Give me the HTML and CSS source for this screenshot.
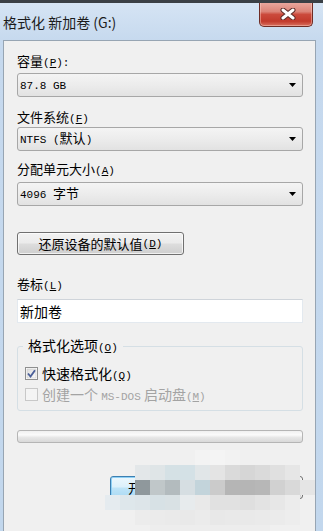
FILE: index.html
```html
<!DOCTYPE html>
<html lang="zh-CN">
<head>
<meta charset="utf-8">
<title>格式化 新加卷 (G:)</title>
<link rel="stylesheet" href="styles.css">
</head>
<body>
<div class="window">
  <div class="titlebar">
    <div class="title">格式化 新加卷 (G:)</div>
    <div class="close">
      <svg width="16" height="12" viewBox="0 0 16 12">
        <path d="M3 2 L13 10 M13 2 L3 10" stroke="#5a2a26" stroke-width="5" stroke-linecap="round" fill="none"/>
        <path d="M3 2 L13 10 M13 2 L3 10" stroke="#ffffff" stroke-width="3" stroke-linecap="round" fill="none"/>
      </svg>
    </div>
  </div>
  <div class="client">
    <div class="label l1">容量<span class="asc">(<u>P</u>):</span></div>
    <div class="select s1"><span class="val"><span class="asc">87.8 GB</span></span><svg class="arrow" width="7" height="4" viewBox="0 0 7 4"><polygon points="0,0 7,0 3.5,4" fill="#000"/></svg></div>

    <div class="label l2">文件系统<span class="asc">(<u>F</u>)</span></div>
    <div class="select s2"><span class="val"><span class="asc">NTFS (</span>默认<span class="asc">)</span></span><svg class="arrow" width="7" height="4" viewBox="0 0 7 4"><polygon points="0,0 7,0 3.5,4" fill="#000"/></svg></div>

    <div class="label l3">分配单元大小<span class="asc">(<u>A</u>)</span></div>
    <div class="select s3"><span class="val"><span class="asc">4096 </span>字节</span><svg class="arrow" width="7" height="4" viewBox="0 0 7 4"><polygon points="0,0 7,0 3.5,4" fill="#000"/></svg></div>

    <div class="button restore">还原设备的默认值<span class="asc">(<u>D</u>)</span></div>

    <div class="label l4">卷标<span class="asc">(<u>L</u>)</span></div>
    <div class="textbox">新加卷</div>

    <fieldset class="group">
      <legend>格式化选项<span class="asc">(<u>O</u>)</span></legend>
      <div class="check r1">
        <svg class="box" width="13" height="13" viewBox="0 0 13 13">
          <defs>
            <linearGradient id="cb" x1="0" y1="0" x2="1" y2="1">
              <stop offset="0" stop-color="#dcdcdc"/>
              <stop offset="1" stop-color="#fbfbfb"/>
            </linearGradient>
          </defs>
          <rect x="0.5" y="0.5" width="12" height="12" fill="#fff" stroke="#8e8f8f"/>
          <rect x="2" y="2" width="9" height="9" fill="url(#cb)" stroke="#c6c6c6" stroke-width="0.6"/>
          <path d="M3 6.5 L5.5 9.5 L10 3.2" stroke="#4a5f98" stroke-width="1.9" fill="none"/>
        </svg>
        <span>快速格式化<span class="asc">(<u>Q</u>)</span></span>
      </div>
      <div class="check r2 disabled">
        <svg class="box" width="13" height="13" viewBox="0 0 13 13">
          <rect x="0.5" y="0.5" width="12" height="12" fill="#f4f4f4" stroke="#c8c8c8"/>
        </svg>
        <span>创建一个 <span class="asc">MS-DOS</span> 启动盘<span class="asc">(<u>M</u>)</span></span>
      </div>
    </fieldset>

    <div class="progress"></div>

    <div class="actions">
      <div class="button default">开始<span class="asc">(<u>S</u>)</span></div>
      <div class="button">关闭<span class="asc">(<u>C</u>)</span></div>
    </div>
  </div>

  <div class="mosaic">
    <i></i><i></i><i></i><i></i><i></i><i></i><i style="background:#f3f3f3"></i><i style="background:#f4f4f4"></i><i style="background:#f2f2f2"></i><i></i><i></i><i></i><i></i><i></i>
    <i></i><i></i><i style="background:#e3e7e9"></i><i style="background:#dfe5e7"></i><i style="background:#d5e1e5"></i><i style="background:#d4e1e6"></i><i style="background:#e1e6e8"></i><i style="background:#e4e4e4"></i><i style="background:#dadada"></i><i style="background:#d6d6d6"></i><i style="background:#dadada"></i><i style="background:#e0e0e0"></i><i style="background:#e6e6e6"></i><i></i>
    <i></i><i></i><i style="background:#8f989c"></i><i style="background:#c0c7c9"></i><i style="background:#b3bbbe"></i><i style="background:#d6dee2"></i><i style="background:#c3d4db"></i><i style="background:#cbcbcb"></i><i style="background:#b5b5b5"></i><i style="background:#b5b5b5"></i><i style="background:#b7b7b7"></i><i style="background:#d1d1d1"></i><i style="background:#d9d9d9"></i><i style="background:#e5e5e5"></i>
    <i style="background:#e5ebef"></i><i style="background:#dee7eb"></i><i style="background:#dde5e9"></i><i style="background:#d7e1e5"></i><i style="background:#d9e1e4"></i><i style="background:#e7ebed"></i><i style="background:#e9e9e9"></i><i style="background:#e1e1e1"></i><i style="background:#e1e1e1"></i><i style="background:#dfdfdf"></i><i style="background:#e3e3e3"></i><i style="background:#e7e7e7"></i><i style="background:#ececec"></i><i></i>
    <i></i><i></i><i style="background:#ececec"></i><i style="background:#ebebeb"></i><i style="background:#eaeaea"></i><i style="background:#e9e9e9"></i><i style="background:#ebebeb"></i><i style="background:#e8e8e8"></i><i style="background:#e9e9e9"></i><i style="background:#e9e9e9"></i><i style="background:#eaeaea"></i><i style="background:#ebebeb"></i><i style="background:#ededed"></i><i></i>
    <i></i><i></i><i></i><i style="background:#ededed"></i><i style="background:#ededed"></i><i style="background:#ededed"></i><i style="background:#ededed"></i><i style="background:#ededed"></i><i style="background:#ededed"></i><i style="background:#ededed"></i><i style="background:#ededed"></i><i></i><i></i><i></i>
  </div>
</div>
</body>
</html>
```

FILE: styles.css
```css
* { box-sizing: border-box; }

html, body {
  margin: 0;
  padding: 0;
  background: #c4d8ee;
}

.window {
  position: relative;
  width: 323px;
  height: 531px;
  overflow: hidden;
  display: flex;
  flex-direction: column;
  padding: 0 7px 0 3px;
  border-top: 3px solid #3a4046;
  background: linear-gradient(#d5e4f4, #c6d9ee 38px, #c2d7ed);
  font-family: "Noto Sans CJK SC", "Liberation Sans", sans-serif;
  color: #000;
}

.titlebar {
  flex: none;
  height: 37px;
  display: flex;
  justify-content: space-between;
  align-items: flex-start;
  padding-right: 3px;
}

.title {
  font-size: 14px;
  line-height: 20px;
  margin-top: 9px;
  color: #1b1b1b;
  white-space: nowrap;
}

.close {
  width: 54px;
  height: 25px;
  margin-top: -1px;
  border: 1px solid #6e2c25;
  border-top: none;
  border-radius: 0 0 5px 5px;
  background: linear-gradient(#eaaaa1, #dc8478 40%, #cb4a3c 52%, #c23a2c 80%, #d8705f);
  box-shadow: inset 0 0 0 1px rgba(255, 210, 200, 0.45);
  display: flex;
  align-items: center;
  justify-content: center;
  padding-left: 4px;
}

.client {
  flex: 1;
  display: flex;
  flex-direction: column;
  align-items: stretch;
  padding: 11px 12px 0 13px;
  background: #f0f0f0;
  border: 1px solid #97a5b3;
  border-bottom: none;
}

.asc {
  font-family: "Liberation Mono", monospace;
  font-size: 11px;
}

.label {
  font-size: 13px;
  line-height: 18px;
  height: 18px;
  white-space: nowrap;
}
.l2 { margin-top: 11px; }
.l3 { margin-top: 9px; }
.l4 { margin-top: 20px; }

.select {
  height: 24px;
  display: flex;
  align-items: center;
  justify-content: space-between;
  padding: 0 6px 0 2px;
  border: 1px solid #a7a7a7;
  border-radius: 3px;
  background: linear-gradient(#f4f4f4, #ececec 50%, #e2e2e2);
  font-size: 13px;
}
.s1 { margin-top: 3px; }
.s2 { margin-top: 1px; }
.s3 { margin-top: 4px; }

.val { white-space: nowrap; line-height: 18px; }

.button {
  height: 23px;
  display: flex;
  align-items: center;
  justify-content: center;
  font-size: 13px;
  white-space: nowrap;
  border: 1px solid #707070;
  border-radius: 3px;
  background: linear-gradient(#f2f2f2, #ebebeb 48%, #dddddd 52%, #cfcfcf);
  box-shadow: inset 0 0 0 1px rgba(255, 255, 255, 0.7);
}

.restore {
  align-self: flex-start;
  width: 167px;
  margin-top: 26px;
}

.textbox {
  height: 24px;
  margin-top: 6px;
  padding: 0 2px;
  display: flex;
  align-items: center;
  font-size: 14px;
  background: #fff;
  border: 1px solid #e3e9ef;
  border-top-color: #cfd4da;
}

.group {
  margin: 13px 0 0 0;
  padding: 0 7px 6px 7px;
  border: 1px solid #d5dfe5;
  border-radius: 3px;
  min-width: 0;
}

.group legend {
  margin-left: -2px;
  padding: 0 5px;
  font-size: 14px;
  line-height: 18px;
  white-space: nowrap;
}

.check {
  display: flex;
  align-items: center;
  gap: 4px;
  height: 20px;
  font-size: 14px;
  white-space: nowrap;
}
.check .box { flex: none; }
.r1 { margin-top: 6px; }
.r2 { margin-top: 1px; }
.disabled { color: #a3a3a3; }

.progress {
  height: 13px;
  margin-top: 19px;
  border: 1px solid #b5b5b5;
  border-radius: 3px;
  background: linear-gradient(#f0f0f0, #fbfbfb 35%, #e6e6e6 60%, #d9d9d9);
}

.actions {
  margin-top: 33px;
  display: flex;
  justify-content: flex-end;
  gap: 29px;
}
.actions .button { width: 82px; }

.button.default {
  border-color: #3c7fb1;
  background: linear-gradient(#ecf7fd, #dcf0fb 48%, #bfe4f8 52%, #a9d9f3);
  box-shadow: inset 0 0 0 1px #8fd0f5;
}

.mosaic {
  position: absolute;
  left: 105px;
  top: 447px;
  display: grid;
  grid-template-columns: repeat(14, 15px);
  grid-template-rows: repeat(5, 15px) 6px;
}
.mosaic i { display: block; }
```
